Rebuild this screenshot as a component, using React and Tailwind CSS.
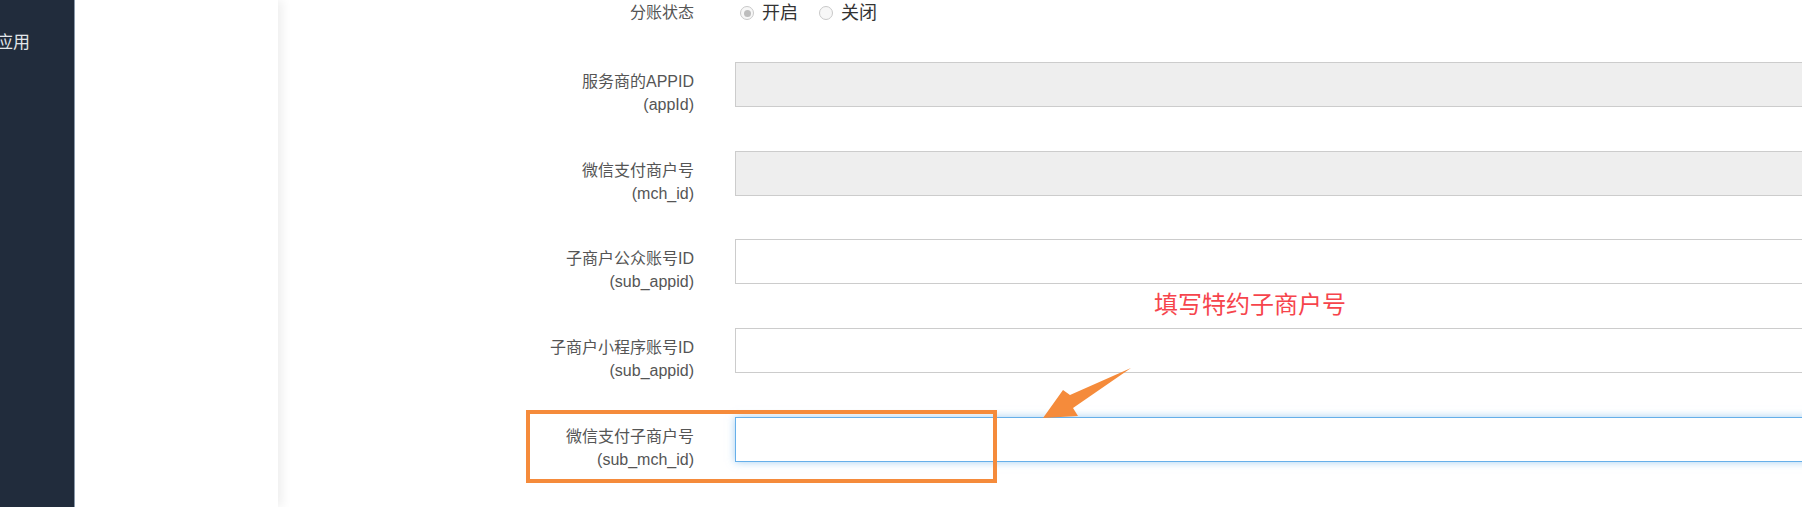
import React from "react";

const fields = [
  { label: "服务商的APPID", key: "(appId)", disabled: true, mt: "mt-[36px]" },
  { label: "微信支付商户号", key: "(mch_id)", disabled: true, mt: "mt-[44px]" },
  { label: "子商户公众账号ID", key: "(sub_appid)", disabled: false, mt: "mt-[43px]" },
  { label: "子商户小程序账号ID", key: "(sub_appid)", disabled: false, mt: "mt-[44px]" },
  { label: "微信支付子商户号", key: "(sub_mch_id)", disabled: false, focus: true, mt: "mt-[44px]" },
];

const Radio = ({ checked }) => (
  <span className="w-[14px] h-[14px] rounded-full border border-[#c9c9c9] bg-[#f7f7f7] flex items-center justify-center">
    {checked && <span className="w-[7px] h-[7px] rounded-full bg-[#bdbdbd]" />}
  </span>
);

const FieldRow = ({ field }) => (
  <div className={`flex h-[45px] ${field.mt}`}>
    <div className="w-[416px] h-[45px] shrink-0 pt-[8px] text-right text-[16px] leading-[23px] text-[#555]">
      <div>{field.label}</div>
      <div>{field.key}</div>
    </div>
    <div className="ml-[41px] w-[1200px] shrink-0">
      <input
        disabled={field.disabled}
        className={
          field.disabled
            ? "block w-full h-[45px] border border-[#cccccc] bg-[#eeeeee] outline-none"
            : field.focus
            ? "block w-full h-[45px] border border-[#66afe9] bg-white outline-none shadow-[0_0_8px_rgba(102,175,233,0.6)]"
            : "block w-full h-[45px] border border-[#cccccc] bg-white outline-none"
        }
      />
    </div>
  </div>
);

export default function App() {
  return (
    <div className="relative flex h-[507px] w-full overflow-hidden bg-white font-['Liberation_Sans','Noto_Sans_CJK_SC',sans-serif]">
      {/* dark sidebar */}
      <div className="w-[75px] shrink-0 bg-[#212c3c] border-r border-[#8b9aac] overflow-hidden">
        <div className="mt-[33px] ml-[-4px] whitespace-nowrap text-[17px] leading-[20px] text-[#e2e6ea]">应用</div>
      </div>

      {/* sub nav */}
      <div className="relative z-10 w-[203px] shrink-0 bg-white shadow-[4px_0_10px_rgba(0,0,0,0.07)]" />

      {/* form */}
      <div className="flex-1 min-w-0">
        <div className="flex h-[26px] items-center">
          <div className="w-[416px] shrink-0 text-right text-[16px] text-[#555]">分账状态</div>
          <div className="ml-[46px] flex items-center text-[18px] text-[#333]">
            <Radio checked />
            <span className="ml-[8px]">开启</span>
            <span className="ml-[21px]"><Radio /></span>
            <span className="ml-[8px]">关闭</span>
          </div>
        </div>
        {fields.map((f) => (
          <FieldRow key={f.label} field={f} />
        ))}
      </div>

      {/* annotations */}
      <div className="absolute left-[1154px] top-[292px] whitespace-nowrap text-[24px] leading-[26px] text-[#f6444c]">
        填写特约子商户号
      </div>
      <div className="absolute left-[526px] top-[410px] w-[471px] h-[73px] border-[4px] border-[#f58b3b] pointer-events-none" />
      <svg className="absolute left-[1040px] top-[365px]" width="95" height="56" viewBox="0 0 95 56">
        <polygon points="91,3 30,30 23,25 3,53 38,51 33,43" fill="#f58b3b" />
      </svg>
    </div>
  );
}
